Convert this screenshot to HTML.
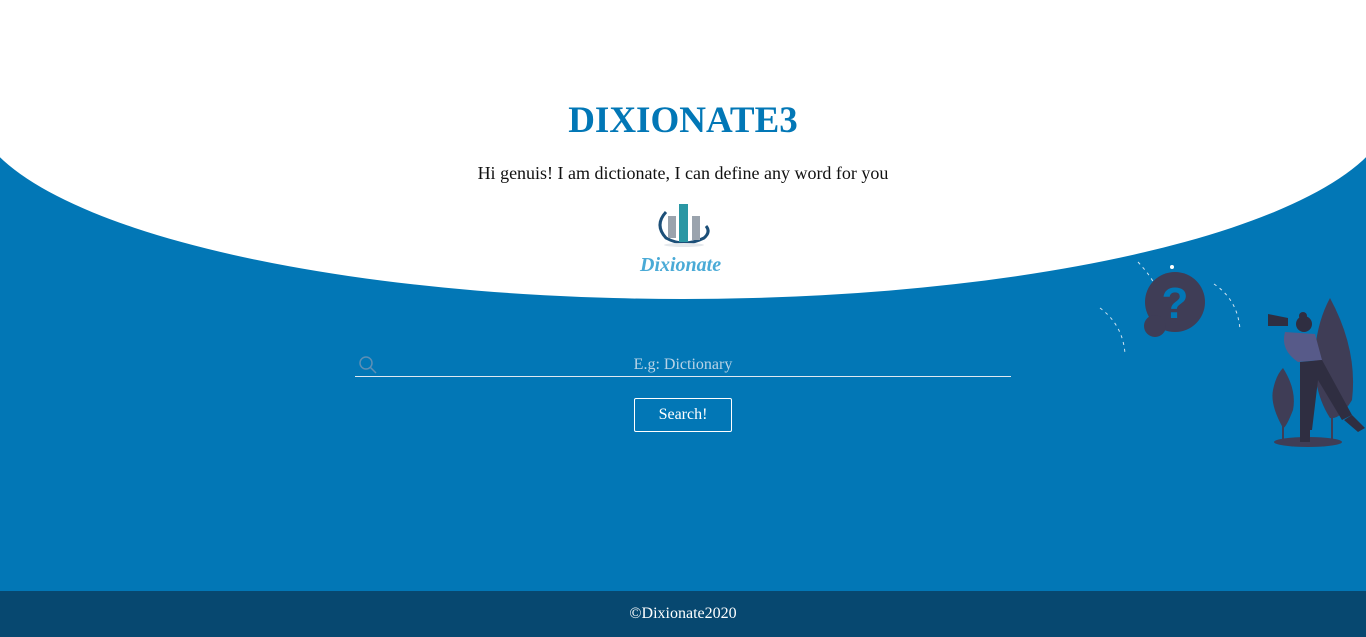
<!DOCTYPE html>
<html><head><style>
html,body{margin:0;padding:0}
body{width:1366px;height:637px;overflow:hidden;position:relative;background:#0277b6;font-family:"Liberation Serif",serif}
.ell{position:absolute;left:-27px;top:-91px;width:1420px;height:390px;border-radius:50%;background:#fff}
.topw{position:absolute;left:0;top:0;width:1366px;height:152px;background:#fff}
h1{position:absolute;top:99px;left:0;width:1366px;text-align:center;margin:0;font-size:37px;color:#0277b6;font-weight:bold;letter-spacing:0}
.sub{position:absolute;top:163px;width:1366px;text-align:center;font-size:18px;color:#111}
.search{position:absolute;left:355px;top:352px;width:656px;height:24px;border-bottom:1px solid #dfe9f2}
.search span{position:absolute;left:0;width:656px;text-align:center;top:4px;color:#b9d3e6;font-size:16px}
.btn{position:absolute;left:634px;top:398px;width:96px;height:32px;border:1px solid #fff;color:#fff;font-size:16px;text-align:center;line-height:32px;border-radius:2px}
.foot{position:absolute;left:0;top:591px;width:1366px;height:46px;background:#074870;color:#fff;text-align:center;line-height:46px;font-size:16px}
</style></head><body>
<div class="topw"></div>
<div class="ell"></div>
<h1>DIXIONATE3</h1>
<div class="sub">Hi genuis! I am dictionate, I can define any word for you</div>
<svg style="position:absolute;left:636px;top:200px" width="95" height="78">
<path d="M30 12 Q18 25 30 38 Q48 48 68 38 Q75 32 70 26" fill="none" stroke="#1c4f78" stroke-width="3"/>
<ellipse cx="48" cy="45" rx="20" ry="2" fill="#e4e8ec"/>
<rect x="32" y="16" width="8" height="22" fill="#9aa3ad"/>
<rect x="43" y="4" width="9" height="38" fill="#2a97a4"/>
<rect x="56" y="16" width="8" height="24" fill="#9aa3ad"/>
<text x="4" y="71" font-family="Liberation Serif" font-style="italic" font-weight="bold" font-size="20" fill="#4aaad6">Dixionate</text>
</svg>
<div class="search"><svg style="position:absolute;left:4px;top:4px" width="18" height="18"><circle cx="7" cy="7" r="6" fill="none" stroke="#5d8fb5" stroke-width="1.5"/><line x1="11.5" y1="11.5" x2="17" y2="17" stroke="#5d8fb5" stroke-width="1.5"/></svg><span>E.g: Dictionary</span></div>
<div class="btn">Search!</div>
<svg style="position:absolute;left:1090px;top:250px" width="276" height="200">
<g fill="none" stroke="#cfe3f0" stroke-width="1" stroke-dasharray="3 4">
<path d="M48 12 Q60 25 65 35"/><path d="M10 58 Q33 75 35 104"/><path d="M124 34 Q148 50 150 80"/></g>
<circle cx="82" cy="17" r="2" fill="#fff"/>
<circle cx="85" cy="52" r="30" fill="#3f3d56"/><circle cx="65" cy="76" r="11" fill="#3f3d56"/>
<text x="85" y="68" text-anchor="middle" font-family="Liberation Sans" font-weight="bold" font-size="44" fill="#0277b6">?</text>
<path d="M240 48 Q268 100 262 150 Q250 170 240 168 Q222 140 225 100 Q228 70 240 48Z" fill="#3f3d56"/>
<path d="M193 118 Q207 140 203 160 Q196 178 193 178 Q180 155 183 140 Q186 125 193 118Z" fill="#3f3d56"/>
<line x1="193" y1="160" x2="193" y2="190" stroke="#3f3d56" stroke-width="2"/>
<line x1="242" y1="150" x2="242" y2="190" stroke="#3f3d56" stroke-width="2"/>
<ellipse cx="218" cy="192" rx="34" ry="5" fill="#3f3d56"/>
<path d="M178 64 L198 68 L198 76 L178 76Z" fill="#2f2e41"/>
<circle cx="214" cy="74" r="8" fill="#2f2e41"/><circle cx="213" cy="66" r="4" fill="#2f2e41"/>
<path d="M195 82 L225 84 L232 110 L208 112 Q190 100 195 82Z" fill="#575a89"/>
<path d="M210 112 L232 110 L262 165 L252 170 L228 130 L222 180 L210 180Z" fill="#2f2e41"/>
<path d="M262 165 L275 178 L268 182 L254 170Z" fill="#2f2e41"/>
<path d="M210 180 L220 180 L220 192 L210 192Z" fill="#2f2e41"/>
</svg>
<div class="foot">©Dixionate2020</div>
</body></html>
